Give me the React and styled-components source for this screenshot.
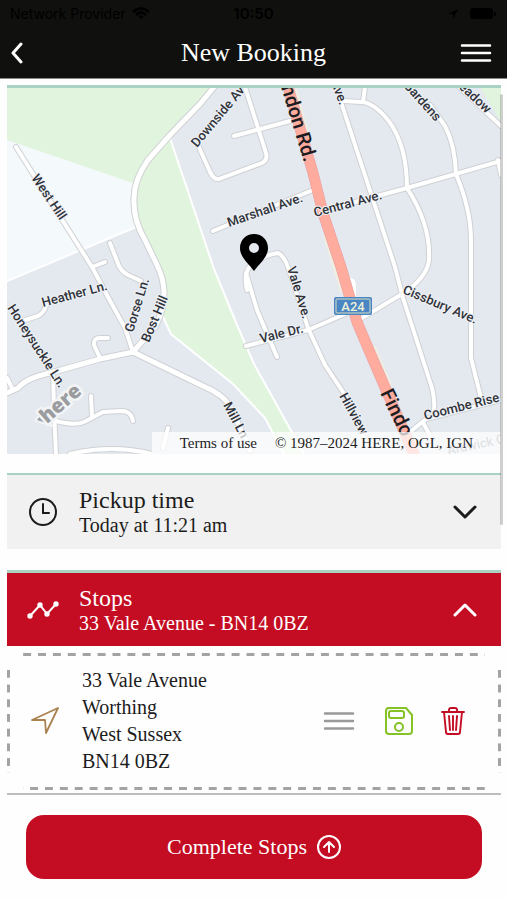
import React, { useState } from 'react';
import styled, { createGlobalStyle } from 'styled-components';

const GlobalStyle = createGlobalStyle`
  * { box-sizing: border-box; }
  body {
    margin: 0;
    background: #fefefe;
    color: #1c1c1c;
    font-family: "Liberation Serif", serif;
  }
  button { font-family: inherit; color: inherit; cursor: pointer; }
`;

const Screen = styled.div`
  position: relative;
  display: flex;
  flex-direction: column;
  min-height: 100vh;
`;

const Header = styled.header`
  background: #10100e;
  color: #fff;
  border-bottom: 1px solid #888;
`;

const StatusBar = styled.div`
  display: grid;
  grid-template-columns: 1fr auto 1fr;
  align-items: center;
  height: 27px;
  padding: 0 10px;
  color: #000;
  font: 14px "Inter", sans-serif;
`;

const StatusGroup = styled.div`
  display: flex;
  align-items: center;
  justify-content: ${({ $end }) => ($end ? 'flex-end' : 'flex-start')};
  gap: 6px;
`;

const Clock = styled.time`
  font-size: 15px;
  font-weight: 600;
`;

const TitleBar = styled.div`
  display: grid;
  grid-template-columns: 1fr auto 1fr;
  align-items: center;
  height: 51px;
  padding: 0 10px;
`;

const Title = styled.h1`
  margin: 0;
  font-size: 26px;
  line-height: 32px;
  font-weight: 400;
`;

const IconButton = styled.button`
  display: flex;
  justify-self: ${({ $end }) => ($end ? 'end' : 'start')};
  padding: ${({ $end }) => ($end ? '0 5px 0 0' : '0')};
  border: 0;
  background: none;
`;

const Content = styled.main`
  display: flex;
  flex-direction: column;
  padding: 6px 6px 0 7px;
`;

const MapCard = styled.section`
  position: relative;
  height: 369px;
  border-top: 3px solid #a9d1c4;
  overflow: hidden;
`;

const MapSvg = styled.svg`
  display: block;
  width: 100%;
  height: 100%;
`;

const Attribution = styled.footer`
  position: absolute;
  right: 0;
  bottom: 0;
  display: flex;
  gap: 18px;
  height: 22px;
  padding: 0 28px;
  background: rgba(255, 255, 255, 0.72);
  font-size: 15px;
  line-height: 22px;
  white-space: nowrap;

  a { color: inherit; text-decoration: none; }
`;

const Panel = styled.button`
  display: grid;
  grid-template-columns: 72px 1fr auto;
  align-items: center;
  width: 100%;
  min-height: 76px;
  margin-top: ${({ $active }) => ($active ? '21px' : '19px')};
  padding: 0 24px 0 0;
  border: 0;
  border-top: ${({ $active }) => ($active ? '3px' : '2px')} solid #a9d1c4;
  background: ${({ $active }) => ($active ? '#c40c22' : '#f1f1f1')};
  color: ${({ $active }) => ($active ? '#fff' : '#1c1c1c')};
  text-align: left;
`;

const PanelIcon = styled.span`
  display: flex;
  justify-content: center;
`;

const PanelText = styled.span`
  display: flex;
  flex-direction: column;
`;

const PanelTitle = styled.span`
  font-size: 24px;
  line-height: 26px;
`;

const PanelDetail = styled.span`
  font-size: 20px;
  line-height: 24px;
`;

const StopCard = styled.article`
  position: relative;
  display: grid;
  grid-template-columns: 75px 1fr auto;
  align-items: center;
  margin-top: 7px;
  padding: 14px 36px 15px 0;

  /* long dashes, broken off before the corners */
  &::before,
  &::after {
    content: '';
    position: absolute;
    pointer-events: none;
  }
  &::before {
    inset: 0 16px;
    background:
      linear-gradient(90deg, #a3a3a3 8px, transparent 8px) top / 15px 3px,
      linear-gradient(90deg, transparent 7px, #a3a3a3 7px) bottom / 15px 3px;
    background-repeat: round no-repeat;
  }
  &::after {
    inset: 17px 0;
    background:
      linear-gradient(#a3a3a3 8px, transparent 8px) left / 3px 15px,
      linear-gradient(#a3a3a3 8px, transparent 8px) right / 3px 15px;
    background-repeat: no-repeat round;
  }
`;

const Address = styled.address`
  font-size: 20px;
  line-height: 27px;
  font-style: normal;
`;

const Actions = styled.div`
  display: flex;
  align-items: center;
`;

const ActionButton = styled(IconButton)`
  margin-left: ${({ $gap }) => $gap || 0}px;
`;

const BottomBar = styled.div`
  margin-top: 3px;
  padding: 20px 19px;
  border-top: 2px solid #bdbdbd;
`;

const CompleteButton = styled.button`
  display: flex;
  align-items: center;
  justify-content: center;
  gap: 10px;
  width: 100%;
  height: 64px;
  border: 0;
  border-radius: 18px;
  background: #c40c22;
  color: #fff;
  font-size: 22px;
`;

const ScrollThumb = styled.div`
  position: absolute;
  top: 94px;
  right: 4px;
  width: 3px;
  height: 431px;
  border-radius: 2px;
  background: rgba(0, 0, 0, 0.18);
`;

const minorRoads = [
  'M16 147 L92 267 L108 297 L125 328 L133 352',
  'M92 267 L105 262',
  'M110 243 L119 266 Q122 272 128 275 L141 281',
  'M22 321 L38 316 Q45 312 46 305',
  'M7 378 L13 390',
  'M53 372 L54 410 L56 454',
  'M100 358 L94 345 Q93 338 100 338 L108 338',
  'M56 421 Q75 426 84 422 L103 412 L122 411 Q131 411 133 421',
  'M91 396 L92 417',
  'M70 454 Q112 444 152 454',
  'M168 428 L163 448',
  'M198 145 L210 172 Q214 180 219 179 L262 163 Q268 160 266 153 L245 87',
  'M234 136 L290 121',
  'M213 231 L313 190',
  'M247 290 Q243 273 251 265 Q264 255 278 253 Q284 256 288 267 L308 328 L325 365 L345 395 L365 440',
  'M246 273 L257 310 L277 357',
  'M246 346 L308 330 L345 314',
  'M362 318 L402 294 Q427 278 429 260 Q431 225 407 188 Q407 145 388 120 Q373 102 361 102 L344 101',
  'M363 102 L365 87',
  'M341 102 L395 267 L403 298 L432 388 Q435 400 434 410',
  'M322 211 L407 188 L501 161',
  'M498 160 L501 175',
  'M430 105 L445 126 Q455 145 456 174 Q471 210 471 240 L471 358 L482 402',
  'M455 83 L501 126',
  'M405 436 L426 419 L501 400',
  'M424 424 L431 438',
];

const mainRoads = [
  'M214 87 L200 104 L170 135 L148 160 Q134 180 134 198 Q133 220 145 240 L157 265 Q172 295 155 327 L133 352',
  'M7 393 L18 388 Q26 378 50 373 L100 359 L133 352 L205 387 Q225 395 232 410 L250 450',
];

const labels = [
  { text: 'West Hill', x: 31, y: 178, angle: 56 },
  { text: 'Downside Av', x: 197, y: 148, angle: -50 },
  { text: 'Marshall Ave.', x: 229, y: 227, angle: -19 },
  { text: 'Central Ave.', x: 315, y: 217, angle: -15 },
  { text: 'Ave.', x: 331, y: 82, angle: 70 },
  { text: 'Gardens', x: 403, y: 86, angle: 48 },
  { text: 'Meadow', x: 450, y: 80, angle: 43 },
  { text: 'Heather Ln.', x: 43, y: 307, angle: -15 },
  { text: 'Gorse Ln.', x: 133, y: 333, angle: -73 },
  { text: 'Bost Hill', x: 149, y: 343, angle: -67 },
  { text: 'Honeysuckle Ln.', x: 7, y: 308, angle: 57 },
  { text: 'Vale Ave.', x: 287, y: 268, angle: 73 },
  { text: 'Vale Dr.', x: 261, y: 343, angle: -14 },
  { text: 'Cissbury Ave.', x: 402, y: 293, angle: 23 },
  { text: 'Hillview', x: 339, y: 396, angle: 61 },
  { text: 'Mill Ln.', x: 223, y: 405, angle: 62 },
  { text: 'Coombe Rise', x: 425, y: 420, angle: -14 },
  { text: 'Ardwick C', x: 448, y: 455, angle: -12, faint: true },
];

const BookingMap = () => (
  <MapSvg viewBox="7 88 494 366" preserveAspectRatio="xMidYMid slice" role="img" aria-label="Map of the pickup location">
    <rect x="-400" y="88" width="1400" height="366" fill="#e4e9f0" />
    <path d="M7 87 L214 87 L170 137 L137 179 L133 184 L7 140 Z" fill="#e1f4dd" />
    <path d="M7 140 L133 183 L136 227 L34 269 L7 281 Z" fill="#f4f9fb" />
    <path
      d="M170 138 L214 269 L237 325 L254 364 L304 454 L282 454 L265 418 L233 384 L171 334 L162 315 L164 290 L157 265 L139 229 L134 200 L137 180 Z"
      fill="#e1f4dd"
    />
    <path
      d="M170 138 L214 269 L237 325 L254 364 L304 454 M162 315 L171 334 L233 384 L265 418 L284 454 M7 281 L136 227"
      fill="none" stroke="#fff" strokeWidth="2"
    />
    <path d="M480 87 L501 87 L501 122 Z" fill="#e1f4dd" />
    <g fill="none" strokeLinecap="round" strokeLinejoin="round">
      {minorRoads.map((d) => <path key={d} d={d} stroke="#cfd1d4" strokeWidth="6" />)}
      {mainRoads.map((d) => <path key={d} d={d} stroke="#cfd1d4" strokeWidth="7" />)}
      {minorRoads.map((d) => <path key={d} d={d} stroke="#fff" strokeWidth="4" />)}
      {mainRoads.map((d) => <path key={d} d={d} stroke="#fff" strokeWidth="5" />)}
      <path d="M294 87 L308 140 M326 237 L342 290 M374 348 L389 384" stroke="#f0ede2" strokeWidth="5" />
      <path d="M348 280 Q354 279 354 286 L354 300" stroke="#fff" strokeWidth="4" />
      <path d="M286 80 L313 173 L323 213 L341 267 L357 322 L371 355 L387 392 L414 454" stroke="#e5a1a4" strokeWidth="11" />
      <path d="M286 80 L313 173 L323 213 L341 267 L357 322 L371 355 L387 392 L414 454" stroke="#ffab9d" strokeWidth="10" />
    </g>
    <g fontFamily="Roboto, sans-serif" fontSize="13" fontWeight="500" fill="#30333a" stroke="#eef1f5" strokeWidth="2" paintOrder="stroke">
      {labels.map((l) => (
        <text key={l.text + l.x} transform={`translate(${l.x} ${l.y}) rotate(${l.angle})`} opacity={l.faint ? 0.45 : 1}>
          {l.text}
        </text>
      ))}
    </g>
    <g fontFamily="Roboto, sans-serif" fontSize="20" fontWeight="500" fill="#1b1d22">
      <text transform="translate(281 87) rotate(73)">ndon Rd.</text>
      <text transform="translate(380 393) rotate(64)">Findo</text>
    </g>
    <rect x="334" y="297" width="38" height="18" rx="2" fill="#4a85c4" />
    <rect x="336" y="299" width="34" height="14" rx="1" fill="none" stroke="#d9dfbd" />
    <text x="353" y="311" textAnchor="middle" fontFamily="Roboto, sans-serif" fontSize="13" fontWeight="500" fill="#eef0d8">A24</text>
    <path d="M37 420 L41 415 L49 424 Z" fill="#9a9c9f" stroke="#f3f4f5" strokeWidth="4" paintOrder="stroke" />
    <text
      transform="translate(47 424) rotate(-41)"
      fontFamily="'Open Sans', sans-serif" fontSize="20" fontWeight="800" fill="#9a9c9f"
      stroke="#f3f4f5" strokeWidth="5" paintOrder="stroke"
    >
      here
    </text>
    <path
      d="M254 234 C246 234 240 240 240 248 C240 257 248 263 254 271 C260 263 268 257 268 248 C268 240 262 234 254 234 Z M254 243 A5 5 0 1 1 254 253 A5 5 0 1 1 254 243 Z"
      fill="#000" fillRule="evenodd"
    />
  </MapSvg>
);

const Chevron = ({ up }) => (
  <svg width="24" height="14" viewBox="0 0 24 14" fill="none" stroke="currentColor" strokeWidth="3" strokeLinecap="round" strokeLinejoin="round">
    <path d={up ? 'M2 12 L12 2 L22 12' : 'M2 2 L12 12 L22 2'} />
  </svg>
);

const Bars = ({ color }) => (
  <svg width="32" height="20" viewBox="0 0 32 20" stroke={color} strokeWidth="2.5" strokeLinecap="round">
    <path d="M2 2.500 H30 M2 10 H30 M2 17.500 H30" />
  </svg>
);

const App = () => {
  const [open, setOpen] = useState('stops');
  const toggle = (name) => setOpen((current) => (current === name ? '' : name));

  return (
    <Screen>
      <GlobalStyle />
      <Header>
        <StatusBar>
          <StatusGroup>
            <span>Network Provider</span>
            <svg width="18" height="13" viewBox="0 0 18 13" fill="none" stroke="#000" strokeWidth="2.6">
              <path d="M1 5 Q9 -2 17 5 M4 8 Q9 3 14 8" />
              <path d="M6.500 9.500 Q9 7.500 11.500 9.500 L9 12 Z" fill="#000" stroke="none" />
            </svg>
          </StatusGroup>
          <Clock>10:50</Clock>
          <StatusGroup $end>
            <svg width="12" height="12" viewBox="0 0 12 12"><path d="M1 6 L11 1 L6 11 L6 6 Z" fill="#000" /></svg>
            <svg width="32" height="11" viewBox="0 0 32 11">
              <rect x="5" width="23" height="11" rx="3" />
              <rect x="29" y="4" width="2" height="4" rx="1" />
            </svg>
          </StatusGroup>
        </StatusBar>
        <TitleBar>
          <IconButton type="button" aria-label="Back">
            <svg width="14" height="22" viewBox="0 0 14 22" fill="none" stroke="#fff" strokeWidth="3" strokeLinecap="round" strokeLinejoin="round">
              <path d="M11 2 L3 11 L11 20" />
            </svg>
          </IconButton>
          <Title>New Booking</Title>
          <IconButton type="button" aria-label="Menu" $end>
            <Bars color="#fff" />
          </IconButton>
        </TitleBar>
      </Header>

      <Content>
        <MapCard>
          <BookingMap />
          <Attribution>
            <a href="#terms">Terms of use</a>
            <span>© 1987–2024 HERE, OGL, IGN</span>
          </Attribution>
        </MapCard>

        <Panel type="button" aria-expanded={open === 'pickup'} onClick={() => toggle('pickup')}>
          <PanelIcon>
            <svg width="28" height="28" viewBox="0 0 28 28" fill="none" stroke="currentColor" strokeWidth="2" strokeLinecap="round">
              <circle cx="14" cy="14" r="13" />
              <path d="M14 6 V15 H20" />
            </svg>
          </PanelIcon>
          <PanelText>
            <PanelTitle>Pickup time</PanelTitle>
            <PanelDetail>Today at 11:21 am</PanelDetail>
          </PanelText>
          <Chevron up={open === 'pickup'} />
        </Panel>

        <Panel type="button" $active aria-expanded={open === 'stops'} onClick={() => toggle('stops')}>
          <PanelIcon>
            <svg width="32" height="18" viewBox="0 0 32 18" fill="#fff" stroke="#fff" strokeWidth="2">
              <path d="M3 15 L13 4 L20 13 L29 3" fill="none" />
              <circle cx="3" cy="15" r="1.700" />
              <circle cx="13" cy="4" r="1.700" />
              <circle cx="20" cy="13" r="1.700" />
              <circle cx="29" cy="3" r="1.700" />
            </svg>
          </PanelIcon>
          <PanelText>
            <PanelTitle>Stops</PanelTitle>
            <PanelDetail>33 Vale Avenue - BN14 0BZ</PanelDetail>
          </PanelText>
          <Chevron up={open === 'stops'} />
        </Panel>

        {open === 'stops' && (
          <StopCard>
            <PanelIcon>
              <svg width="28" height="28" viewBox="0 0 28 28" fill="none" stroke="#a9824f" strokeWidth="1.800" strokeLinejoin="round">
                <path d="M1 13 L27 1 L15 26 L14 13 Z" />
              </svg>
            </PanelIcon>
            <Address>
              33 Vale Avenue<br />
              Worthing<br />
              West Sussex<br />
              BN14 0BZ
            </Address>
            <Actions>
              <ActionButton type="button" aria-label="Reorder stop">
                <Bars color="#999" />
              </ActionButton>
              <ActionButton type="button" aria-label="Save stop" $gap={30}>
                <svg width="28" height="28" viewBox="0 0 28 28" fill="none" stroke="#85c226" strokeWidth="2" strokeLinejoin="round">
                  <path d="M3 1 H21 L27 8 V24 Q27 27 24 27 H4 Q1 27 1 24 V4 Q1 1 4 1 Z" />
                  <rect x="4" y="4" width="15" height="7" rx="2" />
                  <circle cx="14" cy="20" r="4" />
                </svg>
              </ActionButton>
              <ActionButton type="button" aria-label="Delete stop" $gap={28}>
                <svg width="24" height="28" viewBox="0 0 24 28" fill="none" stroke="#c40c22" strokeWidth="1.900" strokeLinecap="round" strokeLinejoin="round">
                  <path d="M1 5 H23 M8 5 V3 Q8 1 10 1 H14 Q16 1 16 3 V5 M3 5 L5 25 Q5 27 7 27 H17 Q19 27 19 25 L21 5 M8 9 L9 23 M12 9 V23 M16 9 L15 23" />
                </svg>
              </ActionButton>
            </Actions>
          </StopCard>
        )}

        <BottomBar>
          <CompleteButton type="button">
            Complete Stops
            <svg width="24" height="24" viewBox="0 0 24 24" fill="none" stroke="#fff" strokeWidth="2" strokeLinecap="round" strokeLinejoin="round">
              <circle cx="12" cy="12" r="11" />
              <path d="M12 17 V7 M7 12 L12 7 L17 12" />
            </svg>
          </CompleteButton>
        </BottomBar>
      </Content>
      <ScrollThumb />
    </Screen>
  );
};

export default App;
